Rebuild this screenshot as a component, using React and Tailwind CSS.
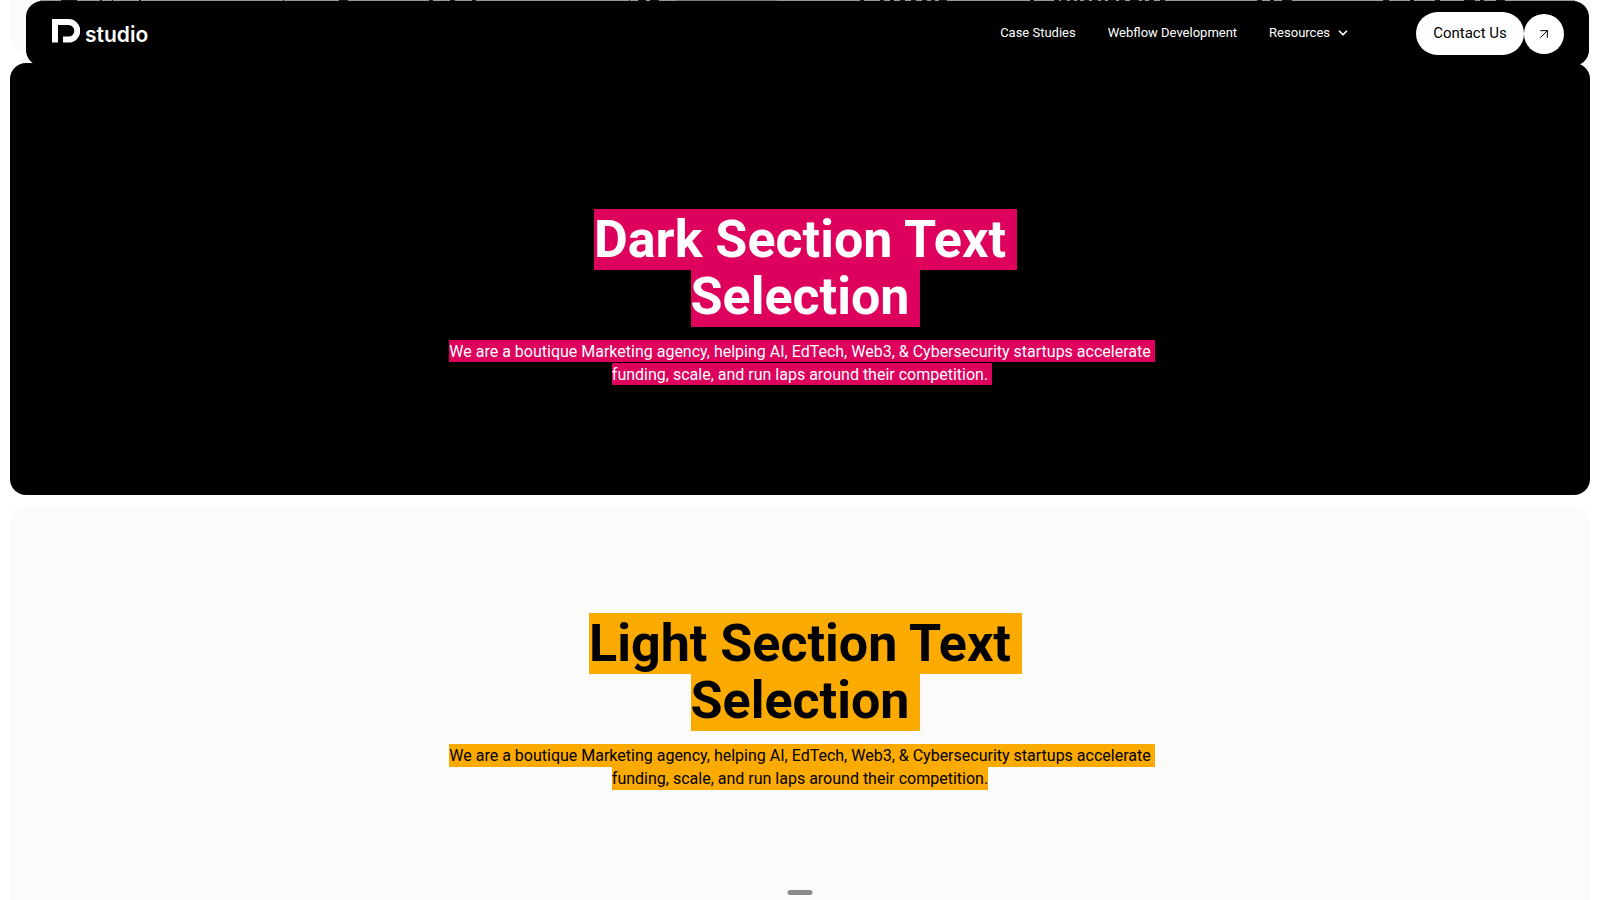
import { ArrowUpRight, ChevronDown } from "lucide-react";

// [x, width] of the headline tops still visible above the nav
const peek = [
    [61, 16], [100, 2], [112, 1], [139, 2], [283, 1], [339, 9], [429, 4], [450, 5], [472, 4],
    [629, 1], [638, 8], [650, 9], [860, 4], [880, 4], [890, 4], [900, 5], [911, 5], [922, 5],
    [931, 4], [939, 8], [1030, 4], [1054, 5], [1061, 6], [1070, 4], [1077, 3], [1084, 5],
    [1092, 6], [1101, 4], [1108, 8], [1119, 6], [1130, 9], [1142, 3], [1149, 5], [1160, 5],
    [1257, 5], [1270, 4], [1282, 10], [1383, 6], [1410, 4], [1435, 5], [1464, 11], [1480, 4],
    [1496, 9],
];

function Logo() {
    return (
        <a href="#" aria-label="studio" className="flex items-end gap-[5px] text-white">
            <svg viewBox="0 0 28 24" className="h-6 w-7" fill="currentColor">
                <path d="M0 0H16.5A11.8 11.8 0 0 1 16.5 23.6H11V17.6H16.5A5.8 5.8 0 0 0 16.5 6H6V23.6H0Z" />
            </svg>
            <span className="font-['Inter',sans-serif] text-[21px] leading-4 font-semibold">studio</span>
        </a>
    );
}

function Nav() {
    return (
        <header className="absolute inset-x-0 top-px z-10 ml-[26px] mr-[11px] flex h-[65px] items-center justify-between rounded-2xl bg-black pl-[26px] pr-[25px]">
            <div className="pb-[6px]">
                <Logo />
            </div>
            <div className="flex items-center">
                <nav className="mr-[66px] flex items-center gap-8 pb-px text-[13px] leading-5 text-white">
                    <a href="#">Case Studies</a>
                    <a href="#">Webflow Development</a>
                    <button type="button" className="flex items-center gap-[6px]">
                        Resources
                        <ChevronDown className="size-[14px]" strokeWidth={3} />
                    </button>
                </nav>
                <a href="#" className="flex h-[43px] w-[108px] items-center justify-center rounded-full bg-white text-[15px] text-black">
                    Contact Us
                </a>
                <a href="#" aria-label="Contact" className="flex size-10 items-center justify-center rounded-full bg-white text-black">
                    <ArrowUpRight className="size-4" strokeWidth={1.5} />
                </a>
            </div>
        </header>
    );
}

function Selection({ title, lines, mark, markText, className }) {
    return (
        <section className={"rounded-2xl text-center " + className}>
            <h2 className="text-[52px] leading-[57px] font-bold">
                {title.map((line) => (
                    <span key={line} className="block">
                        <mark className={"-mr-[11px] pr-[11px] text-inherit " + mark}>{line}</mark>
                    </span>
                ))}
            </h2>
            <p className="mt-[15px] text-base leading-[23px]">
                {lines.map((line) => (
                    <span key={line} className="block">
                        <mark className={"text-inherit " + mark + " " + markText}>{line}</mark>
                    </span>
                ))}
            </p>
        </section>
    );
}

const copy = [
    "We are a boutique Marketing agency, helping AI, EdTech, Web3, & Cybersecurity startups accelerate",
    "funding, scale, and run laps around their competition.",
];

export default function App() {
    return (
        <div className="relative h-screen overflow-hidden bg-white font-['Roboto',sans-serif]">
            <Nav />
            <main className="px-[10px]">
                <div className="mb-3 h-[51px] rounded-b-2xl bg-[#fbfbfb]" />
                <Selection
                    title={["Dark Section Text", "Selection"]}
                    lines={copy}
                    mark="bg-[#de005d]"
                    markText="-mr-1 pt-[2px] pb-px pr-1"
                    className="mb-[11px] h-[432px] bg-black pt-[148px] text-white"
                />
                <Selection
                    title={["Light Section Text", "Selection"]}
                    lines={copy}
                    mark="bg-[#fbaa00]"
                    markText="py-[2px] [span:first-child>&]:-mr-1 [span:first-child>&]:pr-1"
                    className="h-[432px] bg-[#fbfbfb] pt-[109px] text-black"
                />
            </main>
            <svg viewBox="0 0 1600 1" preserveAspectRatio="none" className="absolute inset-x-0 top-0 h-px w-full">
                <rect x="40" width="1535" height="1" fill="#999" />
                <rect x="676" width="101" height="1" fill="#777" />
                {peek.map(([x, w]) => (
                    <rect key={x} x={x} width={w} height="1" fill="#111" />
                ))}
            </svg>
            <div className="absolute bottom-[5px] left-1/2 h-[5px] w-[25px] -translate-x-1/2 rounded-full bg-[#8a8a8a]" />
        </div>
    );
}
